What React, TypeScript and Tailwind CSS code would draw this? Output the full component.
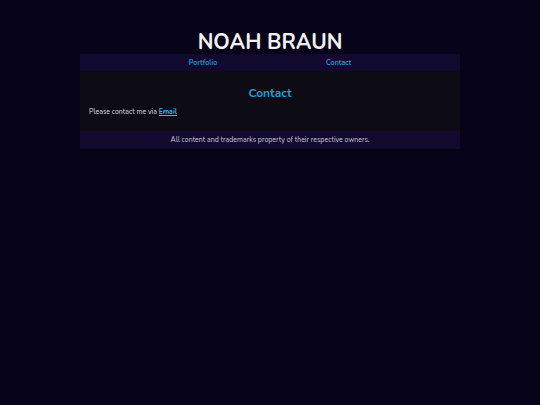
const App = () => {
  return (
    <div
      className="min-h-[405px] w-full bg-[#07041a] text-[#e5e5ee]"
      style={{ fontFamily: "Nunito, Lato, 'Noto Sans', sans-serif" }}
    >
      <div className="mx-auto w-[380px] pt-[31px]">
        <h1 className="text-center text-[21px] font-bold leading-[23px] text-[#f2f2f2]">
          NOAH BRAUN
        </h1>
        <nav className="flex h-[17px] items-center justify-evenly bg-[#120a2e] pt-[2px] text-[7px] font-bold">
          <a className="text-[#1f8fd6]">Portfolio</a>
          <a className="text-[#1f8fd6]">Contact</a>
        </nav>
        <main className="h-[60px] bg-[#0d0b14] px-[9px] pt-[15px]">
          <h2 className="text-center text-[12px] font-bold leading-[14px] text-[#1f9ad8]">
            Contact
          </h2>
          <p className="mt-[7px] text-[7px] leading-[9px] text-[#dcdce4]">
            Please contact me via{" "}
            <a className="font-bold text-[#4fb0e0] underline">Email</a>
          </p>
        </main>
        <footer className="flex h-[18px] items-center justify-center bg-[#120a2e] text-[7px] text-[#c8c8d4]">
          All content and trademarks property of their respective owners.
        </footer>
      </div>
    </div>
  );
};

export default App;
